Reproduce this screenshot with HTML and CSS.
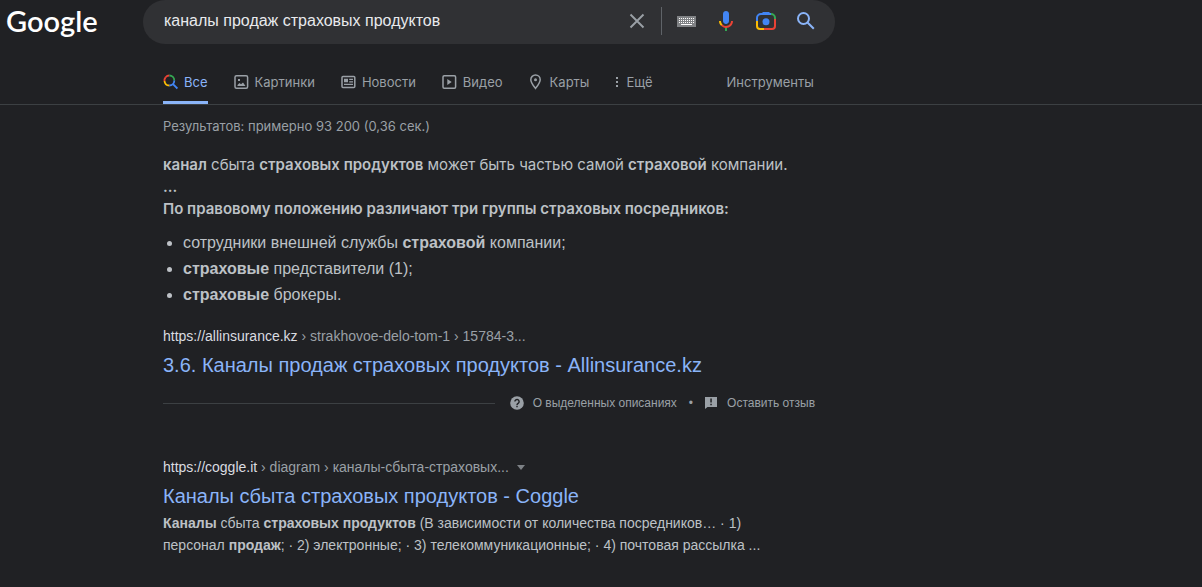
FILE: index.html
```html
<!DOCTYPE html>
<html lang="ru">
<head>
<meta charset="utf-8">
<meta name="viewport" content="width=device-width, initial-scale=1">
<title>каналы продаж страховых продуктов - Google</title>
<link rel="stylesheet" href="styles.css">
</head>
<body>
<header class="top">
  <a class="logo" href="#" aria-label="Google">Google</a>
  <form class="search" role="search">
    <input class="search-input" type="text" aria-label="Поиск" value="каналы продаж страховых продуктов">
    <button class="tool tool-clear" type="button" aria-label="Очистить">
      <svg width="24" height="24" viewBox="0 0 24 24"><path d="M5.5 5.5l13 13M18.5 5.5l-13 13" fill="none" stroke="#9aa0a6" stroke-width="1.9"/></svg>
    </button>
    <span class="divider"></span>
    <button class="tool" type="button" aria-label="Экранная клавиатура">
      <svg width="19" height="11" viewBox="0 0 19 11" shape-rendering="crispEdges"><path fill="#808285" d="M0 0h19v11H0z"/><path d="M2 2.5h15M2 4.5h15M2 6.5h15" stroke="#fff" stroke-dasharray="1 1"/><path fill="#fff" d="M4 8h11v1H4z"/></svg>
    </button>
    <button class="tool" type="button" aria-label="Голосовой поиск">
      <svg width="24" height="24" viewBox="0 0 24 24"><path fill="#4285f4" d="M12 15c1.66 0 3-1.31 3-2.97V4.97C15 3.31 13.66 2 12 2S9 3.31 9 4.97v7.06C9 13.69 10.34 15 12 15z"/><path fill="#34a853" d="M11 18.1h2V22h-2z"/><path fill="#fbbc04" d="M7.05 16.87C5.78 15.59 5 13.93 5 12h2c0 1.45.56 2.42 1.47 3.38v.32l-1.15 1.18z"/><path fill="#ea4335" d="M12 16.93a4.97 5.25 0 0 1-3.54-1.55l-1.41 1.49C8.31 18.14 9.96 19 12 19c3.87 0 6.99-2.92 6.99-7h-1.99c0 2.92-2.24 4.93-5 4.93z"/></svg>
    </button>
    <button class="tool" type="button" aria-label="Поиск по картинке">
      <svg width="24" height="24" viewBox="0 0 24 24"><g fill="none" stroke-width="2"><path d="M3 12V9a4 4 0 0 1 4-4h10" stroke="#4285f4"/><path d="M17 5a4 4 0 0 1 4 4v1" stroke="#34a853"/><path d="M21 10v7a3 3 0 0 1-3 3h-8" stroke="#ea4335"/><path d="M10 20H6a3 3 0 0 1-3-3v-5" stroke="#fbbc04"/></g><path fill="#4285f4" d="M7 5l2-2h6l2 2v1H7z"/><circle cx="12" cy="12.700" r="3.500" fill="#4285f4"/></svg>
    </button>
    <button class="tool" type="submit" aria-label="Найти">
      <svg width="24" height="24" viewBox="0 0 24 24" fill="none" stroke="#8ab4f8" stroke-width="2"><circle cx="9.5" cy="9.5" r="5.5"/><path d="M13.5 13.5l6.300 6.300"/></svg>
    </button>
  </form>
</header>

<nav class="tabs" aria-label="Разделы поиска">
  <a class="tab tab-active" href="#"><svg width="16" height="16" viewBox="0 0 16 16" fill="none" stroke-width="1.8"><path d="M2.7 3.1A5 5 0 0 1 6.3 1.5" stroke="#ea4335"/><path d="M6.3 1.5a5 5 0 0 1 5 5" stroke="#34a853"/><path d="M11.3 6.5a5 5 0 0 1-5 5" stroke="#4285f4"/><path d="M10 10.2l4.400 4.300" stroke="#4285f4"/><path d="M6.3 11.5A5 5 0 0 1 1.5 7" stroke="#fbbc04"/><path d="M1.5 7a5 5 0 0 1 1.200-3.900" stroke="#ea4335"/></svg>Все</a>
  <a class="tab" href="#"><svg width="16" height="16" viewBox="0 0 16 16"><rect x="1" y="1.7" width="12.6" height="12.6" rx="1.5" fill="none" stroke="#9aa0a6" stroke-width="1.5"/><path fill="#9aa0a6" d="M3.5 12v-1l2-2 1.5 1.3L9 8.5l2.5 3.5zM4 5h2v2H4z"/></svg>Картинки</a>
  <a class="tab" href="#"><svg width="16" height="16" viewBox="0 0 16 16"><rect x="1" y="2.5" width="12.8" height="11" rx="1" fill="none" stroke="#9aa0a6" stroke-width="1.5"/><path fill="#9aa0a6" d="M3 4.8h4v3.5H3zM8.2 4.8H12v1.2H8.2zM8.2 7.2H12v1.2H8.2zM3 9.7h9v1.3H3z"/></svg>Новости</a>
  <a class="tab" href="#"><svg width="16" height="16" viewBox="0 0 16 16"><rect x="1" y="1.7" width="12.6" height="12.6" rx="1.2" fill="none" stroke="#9aa0a6" stroke-width="1.5"/><path fill="#9aa0a6" d="M5.3 5v6l4.400-3z"/></svg>Видео</a>
  <a class="tab" href="#"><svg width="16" height="16" viewBox="0 0 16 16"><path d="M6.5 14.4C4.2 11.4 1.8 8.6 1.8 5.7a4.7 4.7 0 0 1 9.4 0c0 2.9-2.4 5.7-4.7 8.7z" fill="none" stroke="#9aa0a6" stroke-width="1.5"/><circle cx="6.5" cy="5.7" r="1.5" fill="#9aa0a6"/></svg>Карты</a>
  <a class="tab" href="#"><svg width="6" height="16" viewBox="0 0 6 16" fill="#9aa0a6"><path d="M1 3h2v2H1zM1 7h2v2H1zM1 11h2v2H1z"/></svg>Ещё</a>
  <a class="tab tab-tools" href="#">Инструменты</a>
</nav>

<main class="results">
  <p class="stats">Результатов: примерно 93 200 (0,36 сек.)</p>

  <section class="featured">
    <div class="lead">
      <p><b>канал</b> сбыта <b>страховых продуктов</b> может быть частью самой <b>страховой</b> компании.</p>
      <p><b>...</b></p>
      <p><b>По правовому положению различают три группы страховых посредников:</b></p>
    </div>
    <ul class="points">
      <li>сотрудники внешней службы <b>страховой</b> компании;</li>
      <li><b>страховые</b> представители (1);</li>
      <li><b>страховые</b> брокеры.</li>
    </ul>
    <cite class="path">https://allinsurance.kz<span> › strakhovoe-delo-tom-1 › 15784-3...</span></cite>
    <h3 class="title"><a href="#">3.6. Каналы продаж страховых продуктов - Allinsurance.kz</a></h3>
    <div class="notes">
      <span class="rule"></span>
      <a class="note" href="#"><svg width="14" height="14" viewBox="0 0 14 14"><circle cx="7" cy="7" r="6.8" fill="#9aa0a6"/><path d="M4.900 5.600a2.100 2.100 0 1 1 3.400 1.600C7.500 7.800 7 8.100 7 9M7 9.800v1.500" fill="none" stroke="#202124" stroke-width="1.4"/></svg>О выделенных описаниях</a>
      <span class="dot">•</span>
      <a class="note" href="#"><svg width="13" height="14" viewBox="0 0 13 14"><path fill="#9aa0a6" d="M0 1h12v10H2.500L0 13z"/><path fill="#202124" d="M5.300 2.500h1.500v4H5.300zM5.300 7.700h1.500v1.500H5.300z"/></svg>Оставить отзыв</a>
    </div>
  </section>

  <section class="result">
    <div class="path-row">
      <cite class="path">https://coggle.it<span> › diagram › каналы-сбыта-страховых...</span></cite>
      <button class="more" type="button" aria-label="Ещё о результате"><svg width="8" height="5" viewBox="0 0 8 5"><path fill="#7d8186" d="M0 0h8L4 5z"/></svg></button>
    </div>
    <h3 class="title"><a href="#">Каналы сбыта страховых продуктов - Coggle</a></h3>
    <p class="snippet"><b>Каналы</b> сбыта <b>страховых продуктов</b> (В зависимости от количества посредников… · 1) персонал <b>продаж</b>; · 2) электронные; · 3) телекоммуникационные; · 4) почтовая рассылка ...</p>
  </section>
</main>
</body>
</html>
```
FILE: styles.css
```css
* { box-sizing: border-box; }

body {
  margin: 0;
  background: #202124;
  color: #bdc1c6;
  font-family: "Liberation Sans", Arial, sans-serif;
  font-size: 14px;
}

a { color: inherit; text-decoration: none; }
p, h3, ul { margin: 0; padding: 0; }
svg { display: block; flex: none; }
button { border: 0; padding: 0; background: none; cursor: pointer; }

.top { display: flex; align-items: flex-start; }

.logo {
  width: 143px;
  flex: none;
  padding-left: 6px;
  color: #fff;
  font: 600 29px/42px Lato, sans-serif;
}

.search {
  display: flex;
  align-items: center;
  flex: 0 1 692px;
  min-width: 0;
  height: 44px;
  padding: 0 9px 2px 21px;
  border-radius: 22px;
  background: #303134;
}

.search-input {
  flex: 1;
  min-width: 0;
  border: 0;
  padding: 0;
  outline: 0;
  background: none;
  color: #e8eaed;
  font: 16px/22px "Liberation Sans", Arial, sans-serif;
}

.tool {
  display: flex;
  align-items: center;
  justify-content: center;
  flex: none;
  width: 40px;
  height: 40px;
}

.tool-clear { width: 48px; }
.divider { width: 1px; height: 28px; margin-right: 4px; background: #5f6368; }

.tabs {
  display: flex;
  gap: 26px;
  height: 61px;
  padding-left: 163px;
  border-bottom: 1px solid #3c4043;
  color: #9aa0a6;
  font: 13px/20px Inter, sans-serif;
}

.tab {
  display: flex;
  align-items: center;
  gap: 5px;
  padding-top: 18px;
  border-bottom: 3px solid transparent;
  white-space: nowrap;
}

.tab-active { border-bottom-color: #8ab4f8; color: #8ab4f8; }
.tab-tools { margin-left: 48px; }

.results { max-width: 815px; padding-left: 163px; }

.stats { padding: 11px 0; color: #9aa0a6; font: 13px/20px Inter, sans-serif; }

.lead { padding-top: 7px; font: 15px/22px Inter, sans-serif; }
.lead b { font-weight: 600; }

.points { padding: 10px 0 0 20px; font-size: 16px; line-height: 26px; }

.path { display: block; color: #dadce0; font-size: 14px; font-style: normal; line-height: 20px; }
.path span { color: #9aa0a6; }
.featured .path { padding-top: 18px; }
.path-row { display: flex; align-items: center; gap: 8px; }

.title { padding-top: 6px; color: #8ab4f8; font-size: 20px; font-weight: 400; line-height: 26px; }

.notes { display: flex; align-items: center; padding-top: 16px; color: #9aa0a6; font-size: 12px; line-height: 18px; }
.rule { flex: 1; height: 1px; margin-right: 15px; background: #3c4043; }
.note { display: flex; align-items: center; gap: 9px; }
.dot { margin: 0 12px; }

.result { padding-top: 45px; }
.snippet { max-width: 600px; padding-top: 3px; font-size: 14px; line-height: 22px; }
```
